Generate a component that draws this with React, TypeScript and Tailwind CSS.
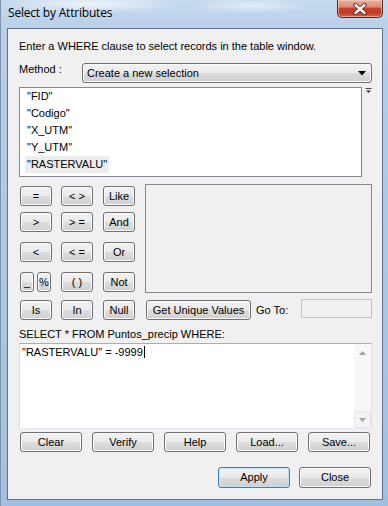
import React from "react";

const btn =
  "flex items-center justify-center border border-[#707070] rounded-[3px] bg-[linear-gradient(#f2f2f2_0%,#ebebeb_48%,#dddddd_52%,#cfcfcf_100%)] shadow-[inset_0_0_0_1px_#fbfbfb] text-[11px] leading-[13px] text-black";

function Btn({ w, label, className = "" }: { w: string; label: string; className?: string }) {
  return <div className={`${btn} ${w} h-[20px] ${className}`}>{label}</div>;
}

function OpRow({ items, mt }: { items: string[]; mt: string }) {
  return (
    <div className={`flex ${mt}`}>
      <Btn w="w-[32px]" label={items[0]} />
      <Btn w="w-[32px]" label={items[1]} className="ml-[9px]" />
      <Btn w="w-[32px]" label={items[2]} className="ml-[10px]" />
    </div>
  );
}

export default function App() {
  const fields = ['"FID"', '"Codigo"', '"X_UTM"', '"Y_UTM"', '"RASTERVALU"'];
  return (
    <div className="w-[388px] h-[506px] overflow-hidden border-l border-[#7f93aa] bg-[radial-gradient(ellipse_90px_10px_at_90px_4px,rgba(255,255,255,0.7),rgba(255,255,255,0)),radial-gradient(ellipse_60px_8px_at_250px_6px,rgba(255,255,255,0.5),rgba(255,255,255,0)),linear-gradient(180deg,#c6dbef_0%,#b7cfe8_6%,#abc6e3_60%,#a3bfdf_100%)] font-['Liberation_Sans',Arial,sans-serif] text-black">
      {/* title bar */}
      <div className="h-[28px] flex items-start justify-between">
        <span className="pl-[7px] pt-[5px] text-[12px] leading-[16px] text-black font-['Open_Sans','Noto_Sans',sans-serif] tracking-[-0.2px]">
          Select by Attributes
        </span>
        <div className="mr-[5px] w-[46px] h-[18px] rounded-b-[5px] border border-t-0 border-[#5a2a24] bg-[linear-gradient(180deg,#e9b0a2_0%,#dd8c78_40%,#c8432c_50%,#c13a22_75%,#d0684f_100%)] shadow-[inset_0_0_0_1px_rgba(255,210,200,0.55)] flex items-center justify-center">
          <svg width="16" height="12" viewBox="0 0 16 12">
            <path d="M3.5 2 L12.5 10 M12.5 2 L3.5 10" stroke="#5b2a22" strokeWidth="4.2" strokeLinecap="round" />
            <path d="M3.5 2 L12.5 10 M12.5 2 L3.5 10" stroke="#ffffff" strokeWidth="2.4" strokeLinecap="round" />
          </svg>
        </div>
      </div>

      {/* client area */}
      <div className="ml-[6px] w-[376px] h-[472px] border border-[#5f7289] bg-[#f0f0f0] flex flex-col pl-[11px] pr-[10px] text-[11px] leading-[13px]">
        <div className="mt-[11px] h-[13px]">Enter a WHERE clause to select records in the table window.</div>

        <div className="mt-[10px] h-[20px] flex">
          <div className="w-[63px] h-[13px]">Method :</div>
          <div className={`${btn} flex-1 h-[20px] !justify-between pl-[4px] pr-[5px]`}>
            <span>Create a new selection</span>
            <svg width="8" height="5" viewBox="0 0 8 5">
              <path d="M0 0 H8 L4 4.5 Z" fill="#000" />
            </svg>
          </div>
        </div>

        <div className="mt-[4px] flex">
          <div className="w-[343px] h-[90px] border border-[#828790] bg-white flex flex-col">
            {fields.map((f, i) => (
              <div key={f} className="h-[17px] flex items-center">
                <span className={`ml-[5px] px-[2px] h-[17px] flex items-center ${i === 4 ? "bg-[#ececec]" : ""}`}>{f}</span>
              </div>
            ))}
          </div>
          <div className="ml-[3px] mt-[1px]">
            <svg width="7" height="6" viewBox="0 0 7 6">
              <path d="M0.5 0.5 H6.5" stroke="#444" strokeWidth="1" />
              <path d="M1 2.5 H6 L3.5 5 Z" fill="#333" />
            </svg>
          </div>
        </div>

        {/* operator + values */}
        <div className="mt-[7px] h-[109px] flex">
          <div className="ml-[1px] w-[115px] flex flex-col">
            <OpRow items={["=", "< >", "Like"]} mt="mt-[2px]" />
            <OpRow items={[">", "> =", "And"]} mt="mt-[6px]" />
            <OpRow items={["<", "< =", "Or"]} mt="mt-[10px]" />
            <div className="flex mt-[10px]">
              <Btn w="w-[14px]" label="_" />
              <Btn w="w-[14px]" label="%" className="ml-[3px]" />
              <Btn w="w-[32px]" label="( )" className="ml-[10px]" />
              <Btn w="w-[32px]" label="Not" className="ml-[10px]" />
            </div>
          </div>
          <div className="ml-[10px] w-[227px] h-[109px] border border-[#828790] bg-[#f0f0f0]" />
        </div>

        <div className="mt-[7px] h-[20px] flex items-center">
          <Btn w="w-[32px]" label="Is" className="ml-[1px]" />
          <Btn w="w-[32px]" label="In" className="ml-[9px]" />
          <Btn w="w-[32px]" label="Null" className="ml-[10px]" />
          <Btn w="w-[105px]" label="Get Unique Values" className="ml-[11px]" />
          <span className="ml-[5px]">Go To:</span>
          <div className="ml-auto self-start -mt-[1px] w-[71px] h-[19px] border border-[#c2c2c2] bg-[#f0f0f0]" />
        </div>

        <div className="mt-[8px] h-[13px]">SELECT * FROM Puntos_precip WHERE:</div>

        <div className="mt-[2px] h-[86px] flex border border-[#abadb3] border-l-[#dde2e8] border-r-[#dde2e8] border-b-[#e3e9ef] bg-white">
          <div className="flex-1 pl-[2px] pt-[2px] flex items-start">
            <span>"RASTERVALU" = -9999</span>
            <span className="ml-[1px] w-[1px] h-[12px] bg-black" />
          </div>
          <div className="w-[17px] flex flex-col justify-between bg-[#f8f8f8]">
            <div className="h-[17px] flex items-center justify-center">
              <svg width="7" height="4" viewBox="0 0 7 4">
                <path d="M0 4 L3.5 0 L7 4 Z" fill="#a3a3a3" />
              </svg>
            </div>
            <div className="h-[17px] flex items-center justify-center border border-[#e6e6e6] rounded-[2px] bg-[#f3f3f3]">
              <svg width="7" height="4" viewBox="0 0 7 4">
                <path d="M0 0 L3.5 4 L7 0 Z" fill="#a3a3a3" />
              </svg>
            </div>
          </div>
        </div>

        <div className="mt-[3px] flex ml-[1px] gap-[10px]">
          <Btn w="w-[62px]" label="Clear" />
          <Btn w="w-[62px]" label="Verify" />
          <Btn w="w-[62px]" label="Help" />
          <Btn w="w-[62px]" label="Load..." />
          <Btn w="w-[62px]" label="Save..." />
        </div>

        <div className="mt-[15px] flex justify-end gap-[9px] pr-[1px]">
          <div className={`${btn} w-[72px] h-[21px] !border-[#3c7fb1] !shadow-[inset_0_0_0_1px_#bfe3f7]`}>Apply</div>
          <div className={`${btn} w-[72px] h-[21px]`}>Close</div>
        </div>
      </div>
    </div>
  );
}
